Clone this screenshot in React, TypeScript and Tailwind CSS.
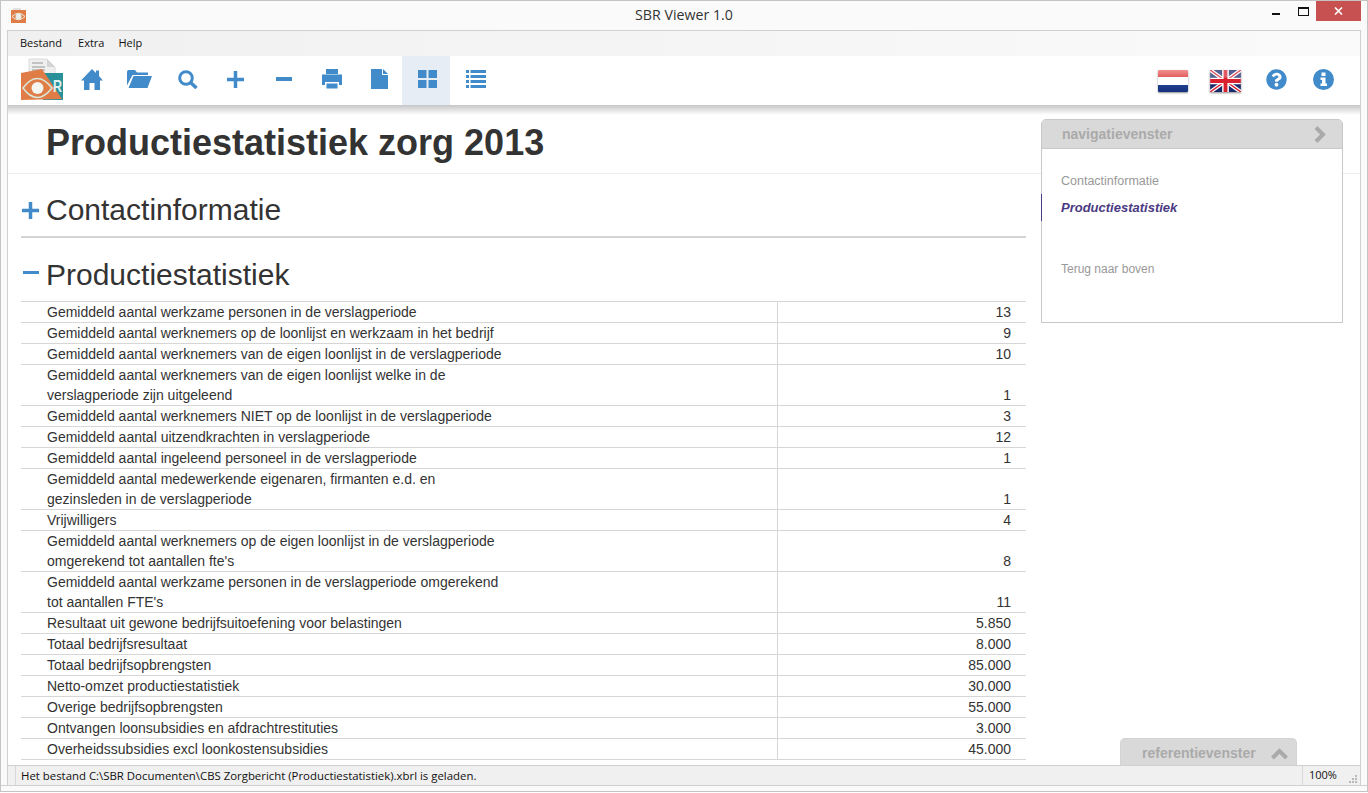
import type { ReactNode } from "react";
import { FaQuestionCircle } from "react-icons/fa";

const rows: { label: ReactNode; value: string }[] = [
  { label: "Gemiddeld aantal werkzame personen in de verslagperiode", value: "13" },
  { label: "Gemiddeld aantal werknemers op de loonlijst en werkzaam in het bedrijf", value: "9" },
  { label: "Gemiddeld aantal werknemers van de eigen loonlijst in de verslagperiode", value: "10" },
  { label: <>Gemiddeld aantal werknemers van de eigen loonlijst welke in de<br />verslagperiode zijn uitgeleend</>, value: "1" },
  { label: "Gemiddeld aantal werknemers NIET op de loonlijst in de verslagperiode", value: "3" },
  { label: "Gemiddeld aantal uitzendkrachten in verslagperiode", value: "12" },
  { label: "Gemiddeld aantal ingeleend personeel in de verslagperiode", value: "1" },
  { label: <>Gemiddeld aantal medewerkende eigenaren, firmanten e.d. en<br />gezinsleden in de verslagperiode</>, value: "1" },
  { label: "Vrijwilligers", value: "4" },
  { label: <>Gemiddeld aantal werknemers op de eigen loonlijst in de verslagperiode<br />omgerekend tot aantallen fte's</>, value: "8" },
  { label: <>Gemiddeld aantal werkzame personen in de verslagperiode omgerekend<br />tot aantallen FTE's</>, value: "11" },
  { label: "Resultaat uit gewone bedrijfsuitoefening voor belastingen", value: "5.850" },
  { label: "Totaal bedrijfsresultaat", value: "8.000" },
  { label: "Totaal bedrijfsopbrengsten", value: "85.000" },
  { label: "Netto-omzet productiestatistiek", value: "30.000" },
  { label: "Overige bedrijfsopbrengsten", value: "55.000" },
  { label: "Ontvangen loonsubsidies en afdrachtrestituties", value: "3.000" },
  { label: "Overheidssubsidies excl loonkostensubsidies", value: "45.000" },
  { label: "", value: "" },
];

function Logo() {
  return (
    <svg width="44" height="46" viewBox="0 0 44 46" className="shrink-0">
      <path d="M8 2h18l8 8v10H8z" fill="#efefef" stroke="#dcdcdc" />
      <path d="M26 2l8 8h-8z" fill="#d4d4d4" />
      <path d="M11 6h11M11 10h13M11 13h13" stroke="#b5b5b5" strokeWidth="1.500" />
      <rect x="22" y="16" width="20" height="27" fill="#2a919b" />
      <path d="M0 16L21 12L41 42L0 43z" fill="#e07c46" />
      <text x="32" y="35" fontFamily="'Liberation Sans', sans-serif" fontWeight="700" fontSize="17" textLength="9" lengthAdjust="spacingAndGlyphs" fill="#dff2f2">R</text>
      <path d="M2 31Q16 12 31 31Q16 50 2 31z" fill="none" stroke="#d8e8dc" strokeWidth="1.500" />
      <circle cx="16.500" cy="31" r="6" fill="#f4f4f0" />
    </svg>
  );
}

function SmallLogo() {
  return (
    <svg width="17" height="17" viewBox="0 0 17 17">
      <rect x="1" y="3" width="15" height="13" fill="#e07c46" />
      <path d="M3 1h8v2H3z" fill="#e2e2e2" />
      <path d="M2 9.500Q8.500 3 15 9.500Q8.500 16 2 9.500z" fill="none" stroke="#e9efe6" strokeWidth="1" />
      <circle cx="8.500" cy="9.500" r="3" fill="#e9efe6" />
    </svg>
  );
}

function FlagNl() {
  return (
    <div className="flex h-[22px] w-[30px] flex-col overflow-hidden rounded-[1px] shadow-[0_1px_2px_rgba(0,0,0,0.45)]">
      <div className="h-[7px] bg-gradient-to-b from-[#f19090] to-[#e25f5f]" />
      <div className="h-[8px] bg-white" />
      <div className="h-[7px] bg-gradient-to-b from-[#1f3f8f] to-[#16317c]" />
    </div>
  );
}

function FlagUk() {
  return (
    <svg width="31" height="22" viewBox="0 0 32 23" className="drop-shadow-[0_1px_1px_rgba(0,0,0,0.45)]">
      <rect width="32" height="23" fill="#1c2b6b" />
      <path d="M0 0L32 23M32 0L0 23" stroke="#fff" strokeWidth="4" />
      <path d="M0 0L32 23M32 0L0 23" stroke="#d8202f" strokeWidth="1.400" />
      <path d="M16 0V23M0 11.500H32" stroke="#fff" strokeWidth="7" />
      <path d="M16 0V23M0 11.500H32" stroke="#d8202f" strokeWidth="4" />
      <rect width="32" height="8" fill="#fff" fillOpacity="0.25" />
    </svg>
  );
}

function HomeIcon() {
  return (
    <svg width="22" height="21" viewBox="0 0 22 21" fill="currentColor">
      <path d="M11 0L15 4V1.500H18V7L22 11.500H19V21H13.500V14H8.500V21H3V11.500H0z" />
    </svg>
  );
}

function FolderIcon() {
  return (
    <svg width="25" height="18" viewBox="0 0 25 18" fill="currentColor">
      <path d="M0 15.500V1.500L1 0H8L10 2.500H21V5H5.500z" />
      <path d="M6.500 6H25L20.500 18H1.500z" />
    </svg>
  );
}

function SearchIcon() {
  return (
    <svg width="20" height="19" viewBox="0 0 20 19" fill="none" stroke="currentColor">
      <circle cx="8" cy="8" r="6.300" strokeWidth="3" />
      <path d="M12.500 12.500L18.500 18" strokeWidth="3.500" />
    </svg>
  );
}

function PlusIcon() {
  return (
    <svg width="17" height="17" viewBox="0 0 17 17" fill="currentColor">
      <path d="M6.750 0H10.250V6.750H17V10.250H10.250V17H6.750V10.250H0V6.750H6.750z" />
    </svg>
  );
}

function MinusIcon() {
  return (
    <svg width="16" height="4" viewBox="0 0 16 4" fill="currentColor">
      <rect width="16" height="4" />
    </svg>
  );
}

function PrintIcon() {
  return (
    <svg width="20" height="20" viewBox="0 0 20 20" fill="currentColor">
      <path d="M4 0H16V5H4z" />
      <path d="M0 5.500H20V16H17V13H3V16H0z" />
      <path d="M4.500 14.500H15.500V19.500H4.500z" />
    </svg>
  );
}

function FileIcon() {
  return (
    <svg width="17" height="20" viewBox="0 0 17 20" fill="currentColor">
      <path d="M0 0H11V6H17V20H0z" />
      <path d="M12 0L17 5H12z" />
    </svg>
  );
}

function GridIcon() {
  return (
    <svg width="19" height="18" viewBox="0 0 19 18" fill="currentColor">
      <rect width="8.500" height="8" />
      <rect x="10.500" width="8.500" height="8" />
      <rect y="10" width="8.500" height="8" />
      <rect x="10.500" y="10" width="8.500" height="8" />
    </svg>
  );
}

function ListIcon() {
  return (
    <svg width="20" height="18" viewBox="0 0 20 18" fill="currentColor">
      {[0, 5, 10, 15].map((y) => (
        <g key={y}>
          <rect y={y} width="3" height="3" />
          <rect x="4.500" y={y} width="15.500" height="3" />
        </g>
      ))}
    </svg>
  );
}

function InfoIcon() {
  return (
    <svg width="21" height="21" viewBox="0 0 21 21">
      <circle cx="10.500" cy="10.500" r="10.500" fill="currentColor" />
      <path d="M8.500 3.500H12.500V7H8.500zM7.500 8.500H12.500V14.500H14V17H7.500V14.500H9V11H7.500z" fill="#fff" />
    </svg>
  );
}

function Grip() {
  return (
    <svg width="8" height="8" viewBox="0 0 8 8" fill="#b8b8b8">
      <rect x="6" y="0" width="2" height="2" />
      <rect x="3" y="3" width="2" height="2" />
      <rect x="6" y="3" width="2" height="2" />
      <rect x="0" y="6" width="2" height="2" />
      <rect x="3" y="6" width="2" height="2" />
      <rect x="6" y="6" width="2" height="2" />
    </svg>
  );
}

function ToolButton({ children, active }: { children: ReactNode; active?: boolean }) {
  return (
    <div className={active ? "flex h-[49px] w-[48px] items-center justify-center bg-[#e6edf4] pb-[3px] pl-[3px] text-[#428bca]" : "flex h-[49px] w-[48px] items-center justify-center pb-[3px] pl-[3px] text-[#428bca]"}>
      {children}
    </div>
  );
}

export default function App() {
  return (
    <div className="relative flex h-[793px] w-[1368px] flex-col overflow-hidden bg-white font-['Liberation_Sans',Arial,sans-serif] text-[#333]">
      <div className="flex h-[792px] flex-col border border-[#c4c4c4] bg-[#fafafa]">
        <div className="relative flex h-[29px] shrink-0 items-start justify-center">
          <div className="absolute left-[9px] top-[6px]"><SmallLogo /></div>
          <span className="mt-[4px] font-['Open_Sans',sans-serif] text-[14.200px] leading-5 text-[#333]">SBR Viewer 1.0</span>
          <div className="absolute right-[6px] top-0 flex h-[20px] items-start">
            <div className="mr-[18px] mt-[12px] h-[2px] w-[8px] bg-[#111]" />
            <div className="mr-[7px] mt-[6px] h-[9px] w-[11px] border border-t-2 border-[#111]" />
            <div className="flex h-[20px] w-[45px] items-center justify-center bg-[#c75050] text-white">
              <svg width="9" height="8" viewBox="0 0 9 8"><path d="M1 0.500L8 7.500M8 0.500L1 7.500" stroke="#fff" strokeWidth="1.600" /></svg>
            </div>
          </div>
        </div>

        <div className="mx-[6px] flex min-h-0 flex-1 flex-col border-x border-t border-[#d0d0d0] bg-white">
          <div className="flex h-[25px] shrink-0 items-center gap-[16px] bg-gradient-to-r from-[#f0f0f0] to-[#fafafa] pl-[12px] font-['Open_Sans',sans-serif] text-[11px] text-[#111]">
            <span>Bestand</span>
            <span>Extra</span>
            <span className="-ml-[2px]">Help</span>
          </div>

          <div className="relative z-10 flex h-[49px] shrink-0 items-center bg-white pl-[13px] pr-[14px]">
            <div className="mr-[1px] mt-[1px] h-[46px] w-[44px] self-start"><Logo /></div>
            <ToolButton><HomeIcon /></ToolButton>
            <ToolButton><FolderIcon /></ToolButton>
            <ToolButton><SearchIcon /></ToolButton>
            <ToolButton><PlusIcon /></ToolButton>
            <ToolButton><MinusIcon /></ToolButton>
            <ToolButton><PrintIcon /></ToolButton>
            <ToolButton><FileIcon /></ToolButton>
            <ToolButton active><GridIcon /></ToolButton>
            <ToolButton><ListIcon /></ToolButton>
            <div className="ml-auto flex items-center">
              <div className="flex w-[48px] justify-center"><FlagNl /></div>
              <div className="ml-[4px] flex w-[48px] justify-center"><FlagUk /></div>
              <div className="ml-[2px] mt-[1px]"><ToolButton><FaQuestionCircle size={21} /></ToolButton></div>
              <div className="-ml-[1px] mt-[1px]"><ToolButton><InfoIcon /></ToolButton></div>
            </div>
            <div className="absolute left-0 top-full h-[10px] w-full bg-gradient-to-b from-[#c6c6c6] to-transparent" />
          </div>

          <div className="relative min-h-0 flex-1 overflow-hidden">
            <div className="flex h-[69px] items-end border-b border-[#ececec] pb-[8px] pl-[38px]">
              <h1 className="text-[36px] font-bold leading-[44px] text-[#333]">Productiestatistiek zorg 2013</h1>
            </div>

            <div className="ml-[13px] w-[1005px]">
              <div className="flex h-[64px] items-center border-b-2 border-[#d4d4d4] pt-[10px]">
                <div className="ml-[1px] mr-[7px] mt-[1px] text-[#428bca]"><PlusIcon /></div>
                <h2 className="text-[30px] font-normal leading-9">Contactinformatie</h2>
              </div>
              <div className="flex h-[63px] items-center pt-[11px]">
                <div className="ml-[2px] mr-[7px] h-[3px] w-[16px] -translate-y-[3px] bg-[#428bca]" />
                <h2 className="text-[30px] font-normal leading-9">Productiestatistiek</h2>
              </div>
              <div className="text-[14px] leading-5">
                {rows.map((row, i) => (
                  <div key={i} className="flex border-t border-[#d6d6d6]">
                    <div className="w-[756px] pl-[26px]">{row.label}</div>
                    <div className="flex flex-1 items-end justify-end border-l border-[#d6d6d6] pr-[15px]">{row.value}</div>
                  </div>
                ))}
              </div>
            </div>

            <div className="absolute right-[17px] top-[14px] z-0 h-[204px] w-[302px] rounded-t-[5px] border border-[#c8c8c8] bg-white">
              <div className="flex h-[29px] items-center justify-between rounded-t-[4px] border-b border-[#c8c8c8] bg-[#d9d9d9] pl-[20px] pr-[16px] text-[14px] font-bold text-[#aaa]">
                <span>navigatievenster</span>
                <svg width="12" height="17" viewBox="0 0 12 17" fill="none" stroke="currentColor" strokeWidth="4">
                  <path d="M2 1.500L9 8.500L2 15.500" />
                </svg>
              </div>
              <div className="relative pl-[19px] pt-[22px] text-[13px] leading-5 text-[#999]">
                <div className="text-[12.500px]">Contactinformatie</div>
                <div className="mt-[7px] font-bold italic text-[#4b3a82]">Productiestatistiek</div>
                <div className="absolute left-[-1px] top-[45px] h-[27px] w-[1px] bg-[#4b3a82]" />
                <div className="mt-[41px] text-[12px]">Terug naar boven</div>
              </div>
            </div>

            <div className="absolute bottom-0 right-[63px] flex h-[27px] w-[177px] items-center gap-[15px] rounded-t-[5px] border border-b-0 border-[#d4d4d4] bg-[#d9d9d9] pl-[21px] pt-[3px] text-[14px] font-bold text-[#aaa]">
              <span>referentievenster</span>
              <svg width="17" height="12" viewBox="0 0 17 12" fill="none" stroke="currentColor" strokeWidth="4">
                <path d="M1.500 10L8.500 3L15.500 10" />
              </svg>
            </div>
          </div>

          <div className="flex h-[20px] shrink-0 items-center border-t border-[#d0d0d0] bg-[#f0f0f0] pl-[7px] font-['Open_Sans',sans-serif] text-[11.400px] text-[#111]">
            <div className="mr-[5px] h-full w-[1px] bg-[#d8d8d8]" />
            <span>Het bestand C:\SBR Documenten\CBS Zorgbericht (Productiestatistiek).xbrl is geladen.</span>
            <div className="ml-auto flex h-full w-[58px] items-center border-l border-[#d8d8d8] pl-[6px] text-[11px]">
              <span>100%</span>
              <div className="ml-auto mr-[3px] mt-[6px]"><Grip /></div>
            </div>
          </div>
        </div>
        <div className="h-[6px] shrink-0 border-t border-[#d0d0d0]" />
      </div>
    </div>
  );
}
